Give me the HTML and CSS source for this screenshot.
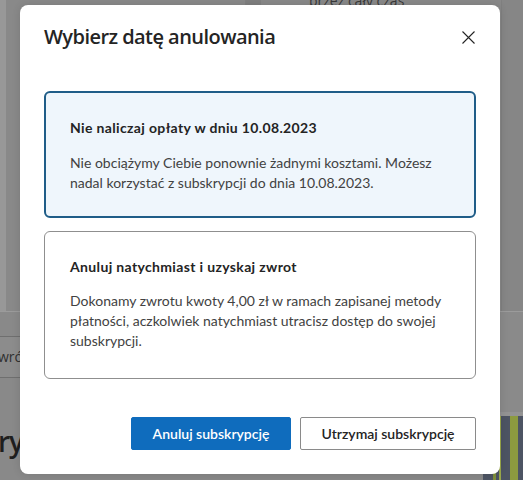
FILE: index.html
```html
<!DOCTYPE html>
<html lang="pl">
<head>
<meta charset="utf-8">
<title>Wybierz datę anulowania</title>
<link rel="stylesheet" href="styles.css">
</head>
<body>
<div class="page">
  <div class="top-row">
    <div class="edge"></div>
    <div class="bg-card bg-card-left"></div>
    <div class="bg-gap"></div>
    <div class="bg-card bg-card-right"><span class="bg-text">przez cały czas</span></div>
    <div class="bg-rest"></div>
  </div>
  <div class="bottom-row">
    <div class="bg-left-col">
      <div class="bg-btn">wró</div>
      <div class="bg-heading">ryp</div>
    </div>
    <div class="bg-mid"></div>
    <div class="bg-right-col">
      <div class="bg-band"></div>
      <div class="bg-image"><i class="stripe s1"></i><i class="stripe s2"></i><i class="stripe s3"></i></div>
    </div>
  </div>
</div>

<div class="dialog" role="dialog" aria-labelledby="dlg-title">
  <div class="dialog-head">
    <h2 id="dlg-title" class="dialog-title">Wybierz datę anulowania</h2>
    <button class="close" aria-label="Zamknij">
      <svg width="13" height="13" viewBox="0 0 13 13"><path d="M0.5 0.5 L12.5 12.5 M12.5 0.5 L0.5 12.5" stroke="#242424" stroke-width="1.1" fill="none"/></svg>
    </button>
  </div>
  <div class="options">
    <div class="option option-selected">
      <div class="option-title">Nie naliczaj opłaty w dniu 10.08.2023</div>
      <div class="option-text">Nie obciążymy Ciebie ponownie żadnymi kosztami. Możesz nadal korzystać z subskrypcji do dnia 10.08.2023.</div>
    </div>
    <div class="option">
      <div class="option-title">Anuluj natychmiast i uzyskaj zwrot</div>
      <div class="option-text">Dokonamy zwrotu kwoty 4,00 zł w ramach zapisanej metody płatności, aczkolwiek natychmiast utracisz dostęp do swojej subskrypcji.</div>
    </div>
  </div>
  <div class="actions">
    <button class="btn btn-primary">Anuluj subskrypcję</button>
    <button class="btn btn-secondary">Utrzymaj subskrypcję</button>
  </div>
</div>
</body>
</html>
```

FILE: styles.css
```css
* { box-sizing: border-box; }
html, body { margin: 0; padding: 0; }
body {
  width: 523px;
  height: 480px;
  overflow: hidden;
  position: relative;
  font-family: "Lato", "Open Sans", sans-serif;
  background: #878787;
}

/* dimmed page behind the dialog */
.page { display: flex; flex-direction: column; height: 480px; }
.top-row { display: flex; height: 312px; border-bottom: 1px solid #9b9b9b; }
.edge { width: 6px; background: #989898; }
.bg-card { background: #898989; }
.bg-card-left { width: 240px; border-right: 1px solid #808080; }
.bg-gap { width: 14px; background: #7f7f7f; }
.bg-card-right { width: 242px; border-left: 1px solid #808080; border-right: 1px solid #808080; }
.bg-text { display: block; margin: -9px 0 0 48px; font-size: 14px; color: #3a3a3a; font-family: "Open Sans", sans-serif; }
.bg-rest { flex: 1; background: #868686; }

.bottom-row { display: flex; flex: 1; }
.bg-left-col { width: 40px; display: flex; flex-direction: column; background: #898989; }
.bg-btn {
  margin-top: 24px; margin-left: -10px; height: 42px; width: 44px;
  border-top: 1px solid #6f6f6f; border-bottom: 1px solid #6f6f6f;
  background: #8c8c8c; color: #303030; font-size: 14px; line-height: 40px;
  font-family: "Open Sans", sans-serif; padding-left: 8px;
}
.bg-heading {
  margin-top: 44px; font-size: 28px; font-weight: 600; color: #1e1e1e;
  font-family: "Open Sans", sans-serif; margin-left: -2px; letter-spacing: -1px;
}
.bg-mid { flex: 1; background: #888888; }
.bg-right-col { width: 40px; display: flex; flex-direction: column; }
.bg-band { height: 104px; background: #8a8a8a; border-bottom: 4px solid #939393; }
.bg-image { flex: 1; background: #4d5463; display: flex; gap: 3px; padding-left: 10px; }
.stripe { display: block; width: 3px; background: #7f8f3a; }
.s2 { width: 2px; background: #9aa84a; }
.s3 { width: 8px; margin-left: 6px; background: #8c9a3f; }

/* dialog */
.dialog {
  position: absolute;
  left: 20px;
  top: 5px;
  width: 480px;
  background: #ffffff;
  border-radius: 8px;
  padding: 18px 24px 24px 24px;
  box-shadow: 0 0 8px rgba(0,0,0,0.12);
}
.dialog-head { display: flex; align-items: center; justify-content: space-between; height: 28px; }
.dialog-title { margin: 0; font-size: 20px; font-weight: 600; line-height: 28px; color: #242424; font-family: "Open Sans", sans-serif; letter-spacing: -0.55px; }
.close { border: 0; background: none; padding: 0; width: 13px; height: 13px; display: flex; margin-right: 1px; }

.options { display: flex; flex-direction: column; gap: 13px; margin-top: 40px; }
.option {
  border: 1px solid #8f8f8f;
  border-radius: 6px;
  padding: 25px 25px 27px 25px;
  background: #fff;
}
.option-selected {
  border: 2px solid #1f5d88;
  padding: 25px 24px 23px 24px;
  background: #eff6fc;
}
.option-title { font-size: 14px; font-weight: 700; line-height: 20px; color: #242424; letter-spacing: 0.35px; }
.option-text { margin-top: 14px; font-size: 14px; line-height: 20px; color: #424242; }
.option-selected .option-text { margin-top: 15px; }

.actions { display: flex; justify-content: flex-end; gap: 9px; margin-top: 38px; }
.btn {
  height: 33px; border-radius: 2px; font-size: 14px; font-weight: 600;
  font-family: "Lato", "Open Sans", sans-serif; padding: 0 10px;
}
.btn-primary { width: 160px; background: #0f6cbd; color: #fff; border: 1px solid #0f6cbd; }
.btn-secondary { width: 176px; background: #fff; color: #242424; border: 1px solid #8a8a8a; }
```
